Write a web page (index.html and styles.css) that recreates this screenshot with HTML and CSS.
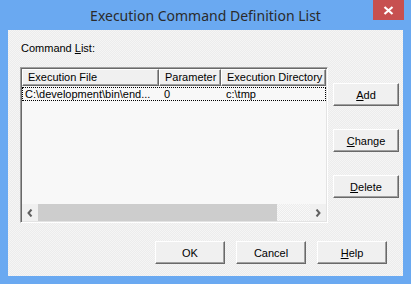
FILE: index.html
```html
<!DOCTYPE html>
<html>
<head>
	<meta charset="utf-8">
	<title>Execution Command Definition List</title>
	<link rel="stylesheet" href="styles.css">
</head>
<body>
	<div class="window">
		<div class="titleBar">
			<span></span>
			<span class="title">Execution Command Definition List</span>
			<span class="close">
				<svg width="11" height="9" viewBox="0 0 11 9">
					<path d="M1.5 1 L9.5 8 M9.5 1 L1.5 8" stroke="#fff" stroke-width="2.2" fill="none"/>
				</svg>
			</span>
		</div>
		<div class="client">
			<div class="label">Command <u>L</u>ist:</div>
			<div class="main">
				<div class="listView">
					<div class="header">
						<div class="col c1">Execution File</div>
						<div class="col c2">Parameter</div>
						<div class="col c3">Execution Directory</div>
					</div>
					<div class="row">
						<div class="cell c1">C:\development\bin\end...</div>
						<div class="cell c2">0</div>
						<div class="cell c3">c:\tmp</div>
					</div>
					<div class="filler"></div>
					<div class="hScroll">
						<div class="arrow">
							<svg width="6" height="8" viewBox="0 0 6 8"><path d="M4.5 0.5 L1.5 4 L4.5 7.5" stroke="#606060" stroke-width="2" fill="none"/></svg>
						</div>
						<div class="thumb"></div>
						<div class="track"></div>
						<div class="arrow">
							<svg width="6" height="8" viewBox="0 0 6 8"><path d="M1.5 0.5 L4.5 4 L1.5 7.5" stroke="#606060" stroke-width="2" fill="none"/></svg>
						</div>
					</div>
				</div>
				<div class="side">
					<button class="btn small"><u>A</u>dd</button>
					<button class="btn small"><u>C</u>hange</button>
					<button class="btn small"><u>D</u>elete</button>
				</div>
			</div>
			<div class="footer">
				<button class="btn">OK</button>
				<button class="btn">Cancel</button>
				<button class="btn"><u>H</u>elp</button>
			</div>
		</div>
	</div>
</body>
</html>
```

FILE: styles.css
```css
*{
	margin: 0px;
	padding: 0px;
	box-sizing: border-box;
}
body{
	background-color: #6aa9f1;
	font-family: "Liberation Sans", Arial, sans-serif;
	font-size: 11px;
	color: #000;
}
.window{
	width: 411px;
	height: 284px;
	background-color: #6aa9f1;
}
.titleBar{
	height: 30px;
	display: grid;
	grid-template-columns: 1fr auto 1fr;
	padding: 0px 7px;
}
.title{
	font-family: "Noto Sans", "Open Sans", sans-serif;
	font-size: 14px;
	line-height: 31px;
	color: #2b2b2b;
	white-space: nowrap;
}
.close{
	justify-self: end;
	width: 31px;
	height: 20px;
	background-color: #c75050;
	display: flex;
	align-items: center;
	justify-content: center;
}
.close svg{
	display: block;
}
.client{
	margin: 0px 8px;
	height: 246px;
	padding: 12px 0px 0px 12px;
	background-color: #f0f0f0;
	background-image: repeating-conic-gradient(#ececec 0 25%, #f5f5f5 0 50%);
	background-size: 2px 2px;
	display: flex;
	flex-direction: column;
}
.label{
	line-height: 13px;
	margin-left: 1px;
	height: 13px;
}
.main{
	margin-top: 12px;
	display: flex;
	gap: 5px;
}
.listView{
	width: 308px;
	height: 156px;
	border: 1px solid;
	border-color: #a0a0a0 #fff #fff #a0a0a0;
	box-shadow: inset 1px 1px #696969, inset -1px -1px #e3e3e3;
	padding: 1px;
	background-color: #f8f8f8;
	display: flex;
	flex-direction: column;
}
.header{
	display: flex;
	height: 17px;
	background-color: #f0f0f0;
}
.col{
	height: 17px;
	line-height: 15px;
	padding-left: 5px;
	border-top: 1px solid #fff;
	border-left: 1px solid #fff;
	border-right: 1px solid #696969;
	border-bottom: 1px solid #696969;
	box-shadow: inset -1px -1px #a0a0a0;
	white-space: nowrap;
	overflow: hidden;
}
.c1{
	width: 137px;
}
.c2{
	width: 62px;
}
.c3{
	width: 105px;
}
.row{
	display: flex;
	height: 14px;
	margin-top: 1px;
	outline: 1px dotted #000;
	outline-offset: -1px;
}
.cell{
	line-height: 14px;
	padding-left: 5px;
	white-space: nowrap;
}
.row .c1{
	padding-left: 3px;
}
.filler{
	flex: 1;
}
.hScroll{
	height: 17px;
	display: flex;
	background-color: #f0f0f0;
	background-image: repeating-conic-gradient(#ececec 0 25%, #f8f8f8 0 50%);
	background-size: 2px 2px;
}
.arrow{
	width: 16px;
	display: flex;
	align-items: center;
	justify-content: center;
	background-color: #f0f0f0;
}
.thumb{
	width: 239px;
	background-color: #cdcdcd;
}
.track{
	flex: 1;
}
.side{
	display: flex;
	flex-direction: column;
	gap: 23px;
	padding-top: 16px;
}
.btn{
	width: 70px;
	height: 23px;
	font-family: "Liberation Sans", Arial, sans-serif;
	font-size: 11px;
	color: #000;
	background-color: #f0f0f0;
	border: 1px solid;
	border-color: #fff #696969 #696969 #fff;
	box-shadow: inset -1px -1px #a0a0a0;
}
.small{
	width: 66px;
}
.footer{
	margin-top: 18px;
	display: flex;
	justify-content: flex-end;
	gap: 11px;
	padding-right: 16px;
}
```
